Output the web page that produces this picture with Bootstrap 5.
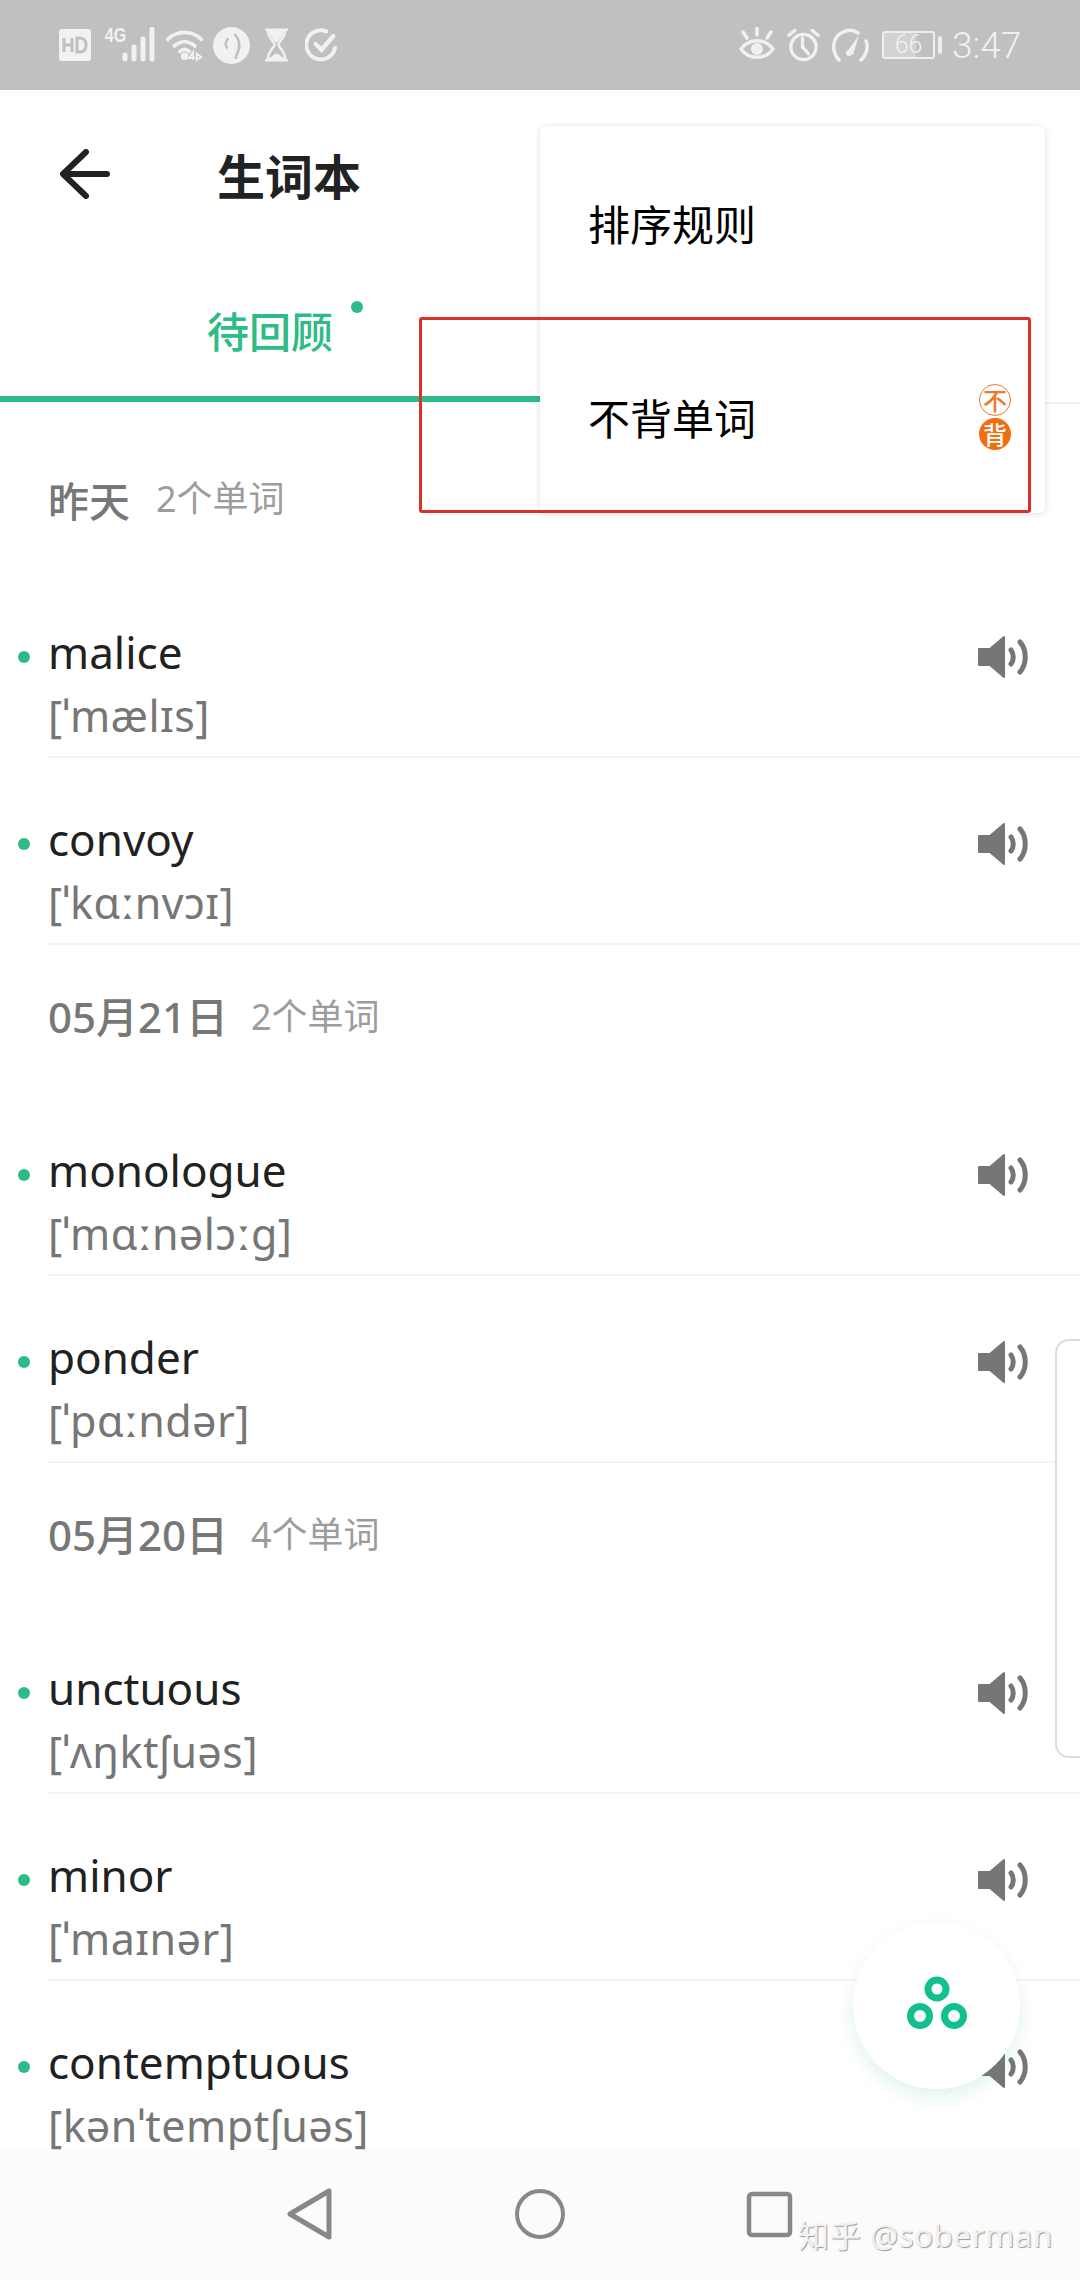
<!DOCTYPE html>
<html lang="zh-CN">

<head>
    <meta charset="UTF-8">
    <title>生词本</title>
    <meta name="viewport" content="width=device-width, initial-scale=1">
    <link href="https://cdn.jsdelivr.net/npm/bootstrap@5.3.3/dist/css/bootstrap.min.css" rel="stylesheet">
    <style>
        html, body { height: 2280px; overflow: hidden; }
        body { font-family: "Noto Sans", "Noto Sans CJK SC", sans-serif; background: #fff; }
        .screen { width: 1080px; height: 2280px; overflow: hidden; }

        .status-bar { height: 90px; background: #c0c0c0; color: #f1f1f1; padding: 0 61px 0 59px; }
        .status-4g { font: 700 20px/20px "Liberation Sans", sans-serif; transform: scaleX(.8); width: 18px; margin: -20px 0 0 12px; }
        .si-wifi { margin-left: 10px; }
        .si-circle { margin-left: 8px; }
        .si-glass { margin-left: 14px; }
        .si-check { margin-left: 16px; }
        .si-alarm { margin-left: 12px; }
        .si-gauge { margin-left: 11px; }
        .status-time { font: 300 37px/1 Roboto, sans-serif; color: #f1f1f1; margin-left: 10px; width: 67px; }
        .batt { width: 53px; height: 28px; margin-left: 13px; border: 2px solid #eee; border-radius: 3px; background: linear-gradient(90deg, #d2d2d2 66%, transparent 66%); font: 300 25px/24px Roboto, sans-serif; }
        .batt-tip { width: 4px; height: 18px; background: #eee; border-radius: 2px; margin-left: 3px; }

        .top-bar { height: 170px; padding: 0 0 3px 60px; }
        .top-title { font: 700 48px/1 "Noto Sans CJK SC", sans-serif; color: #222; margin-left: 107px; }

        .tab-row { height: 142px; }
        .tab-on { width: 540px; height: 142px; border-bottom: 6px solid #2dbb86; color: #2dbb86; font: 500 42px/1 "Noto Sans CJK SC", sans-serif; padding-top: 49px; }
        .tab-rest { height: 144px; border-bottom: 2px solid #f1f1f1; }
        .tab-dot { width: 12px; height: 12px; background: #2dbb86; border-radius: 50%; left: 351px; top: 41px; }

        .word-list { padding-top: 25px; min-height: 0; }
        .day-head { height: 144px; padding: 48px 0 0 48px; }
        .day-name { font: 500 41px/48px "Noto Sans CJK SC", sans-serif; color: #777; width: 109px; }
        .day-name-wide { width: 204px; font-size: 42px; font-family: "Noto Sans", "Noto Sans CJK SC", sans-serif; }
        .day-count { font: 400 36px/48px "Noto Sans", "Noto Sans CJK SC", sans-serif; color: #9c9c9c; margin-left: -1px; }

        .word-row { height: 187px; padding-left: 48px; }
        .word-dot { width: 12px; height: 12px; background: #2dbb86; border-radius: 50%; left: 18px; top: 80px; }
        .word-body { height: 187px; border-bottom: 2px solid #f3f3f3; padding-top: 52px; }
        .word-text { font: 400 44px/58px "Noto Sans", sans-serif; color: #212121; }
        .word-phon { font: 400 43px/44px "Noto Sans", sans-serif; letter-spacing: .5px; color: #767676; margin-top: 13px; }
        .word-sound { right: 50px; top: 64px; }

        .nav-bar { height: 130px; background: #fbfbfb; padding: 38px 0 0 286px; z-index: 2; }
        .nav-gap { margin-left: 180px; }

        .pop-menu { left: 540px; top: 126px; width: 505px; height: 387px; border-radius: 6px; background: #fff; box-shadow: 0 1px 6px rgba(0, 0, 0, .14); font: 400 42px/1 "Noto Sans CJK SC", sans-serif; color: #000; z-index: 5; }
        .pop-item { height: 193px; padding-left: 48px; }
        .pop-item + .pop-item { padding-top: 2px; }
        .pop-tag { width: 32px; height: 32px; border-radius: 50%; font: 500 24px/30px "Noto Sans CJK SC", sans-serif; text-align: center; }
        .pop-tag-line { border: 1px solid #ec7a2b; color: #ec7a2b; }
        .pop-tag-fill { background: #f26d0f; color: #fff; margin-top: 2px; line-height: 32px; }
        .pop-tags { right: 34px; top: 258px; }

        .red-box { left: 419px; top: 317px; width: 612px; height: 196px; border: 3px solid #d9302a; border-radius: 3px; z-index: 6; }
        .side-card { left: 1055px; top: 1339px; width: 40px; height: 419px; border: 2px solid #ddd; border-radius: 14px; background: #fff; }
        .fab { left: 853px; top: 1922px; width: 167px; height: 167px; padding-bottom: 5px; border-radius: 50%; background: #fff; box-shadow: 0 8px 18px rgba(30, 170, 130, .14); z-index: 4; }
        .mark-text { left: 798px; top: 2213px; font: 400 31px/44px "Noto Sans", "Noto Sans CJK SC", sans-serif; letter-spacing: .7px; color: #f2f2f2; text-shadow: 1px 1px 1px #9a9a9a; z-index: 7; }
    </style>
</head>

<body>

    <svg width="0" height="0" class="position-absolute">
        <symbol id="sound" viewBox="0 0 52 44">
            <path d="M1 14h11L26 2v40L12 30H1z" fill="#767676" stroke="#767676" stroke-width="2" stroke-linejoin="round"/>
            <path d="M33 15c3 4 3 10 0 14M42 7c7 8 7 22 0 30" fill="none" stroke="#767676" stroke-width="5" stroke-linecap="round"/>
        </symbol>
    </svg>

    <div class="screen position-relative d-flex flex-column">

        <!-- status bar -->
        <div class="status-bar d-flex align-items-center justify-content-between flex-shrink-0">
            <div class="d-flex align-items-center">
                <svg width="32" height="32" viewBox="0 0 32 32"><rect width="32" height="32" rx="3" fill="#f1f1f1"/><path d="M5 9v14M13 9v14M5 16h8M18 9v14h3c4 0 6-3 6-7s-2-7-6-7z" fill="none" stroke="#c0c0c0" stroke-width="3"/></svg>
                <span class="status-4g">4G</span>
                <svg width="35" height="36" viewBox="0 0 35 36"><path d="M4 28v4M13 20v12M22 12v20M31 2v30" stroke="#f1f1f1" stroke-width="5" stroke-linecap="round"/></svg>
                <svg class="si-wifi" width="39" height="36" viewBox="0 0 42 36"><path d="M2 12C12 2 28 2 38 12M9 19c7-6 15-6 22 0M15 25c3-3 7-3 10 0" fill="none" stroke="#f1f1f1" stroke-width="4" stroke-linecap="round"/><circle cx="20" cy="30" r="4" fill="#f1f1f1"/><path d="M29 34v-8l-4 6h6M33 27l5 4-5 3z" fill="none" stroke="#f1f1f1" stroke-width="2"/></svg>
                <svg class="si-circle" width="37" height="37" viewBox="0 0 36 36"><circle cx="18" cy="18" r="18" fill="#f1f1f1"/><path d="M15 11c-3 3-4 6-1 10M21 7c5 5 6 13 2 20l-1 4" fill="none" stroke="#c0c0c0" stroke-width="2.5"/></svg>
                <svg class="si-glass" width="25" height="36" viewBox="0 0 26 36"><path d="M1 2h24M1 34h24" stroke="#f1f1f1" stroke-width="2.5"/><path d="M4 3h18c0 7-5 10-7 14v1c2 4 7 8 7 14H4c0-6 5-10 7-14v-1C9 13 4 10 4 3z" fill="none" stroke="#f1f1f1" stroke-width="2.5"/><path d="M5 3h16c-1 6-5 10-8 13C10 13 6 9 5 3zM7 32c1-3 4-5 6-5s5 2 6 5z" fill="#f1f1f1"/></svg>
                <svg class="si-check" width="33" height="36" viewBox="0 0 34 36"><path d="M31 21A15 15 0 1 1 22 4" fill="none" stroke="#f1f1f1" stroke-width="4" stroke-linecap="round"/><path d="M11 17l6 6 12-14" fill="none" stroke="#f1f1f1" stroke-width="4.5" stroke-linecap="round"/></svg>
            </div>
            <div class="d-flex align-items-center">
                <svg width="36" height="36" viewBox="0 0 36 36"><path d="M2 22c8-11 24-11 32 0-8 11-24 11-32 0z" fill="none" stroke="#f1f1f1" stroke-width="3.5"/><circle cx="18" cy="22" r="6" fill="#f1f1f1"/><path d="M18 1v7M4 5l4 6M32 5l-4 6" stroke="#f1f1f1" stroke-width="3.5" stroke-linecap="round"/></svg>
                <svg class="si-alarm" width="33" height="36" viewBox="0 0 34 36"><circle cx="17" cy="20" r="13" fill="none" stroke="#f1f1f1" stroke-width="3.5"/><path d="M16 11v9l6 7M2 8l6-5M32 8l-6-5" fill="none" stroke="#f1f1f1" stroke-width="3.5" stroke-linecap="round"/></svg>
                <svg class="si-gauge" width="38" height="36" viewBox="0 0 38 36"><path d="M8 33C0 24 1 10 12 5c6-3 11-2 15 1M30 33c7-7 7-15 5-19" fill="none" stroke="#f1f1f1" stroke-width="3.5" stroke-linecap="round"/><path d="M16 25l12-17-6 20z" fill="#f1f1f1"/><circle cx="18" cy="26" r="3" fill="#f1f1f1"/></svg>
                <div class="batt text-center">66</div>
                <div class="batt-tip"></div>
                <div class="status-time">3:47</div>
            </div>
        </div>

        <!-- title -->
        <div class="top-bar d-flex align-items-center flex-shrink-0">
            <svg width="50" height="50" viewBox="0 0 50 50"><path d="M47 25H4M26 3L3 25l23 22" fill="none" stroke="#222" stroke-width="6" stroke-linecap="round" stroke-linejoin="round"/></svg>
            <div class="top-title">生词本</div>
        </div>

        <!-- tabs -->
        <div class="tab-row d-flex position-relative flex-shrink-0">
            <div class="tab-on text-center">待回顾</div>
            <div class="tab-rest flex-grow-1"></div>
            <span class="tab-dot position-absolute"></span>
        </div>

        <!-- list -->
        <div class="word-list flex-grow-1">
            <div class="day-head d-flex"><div class="day-name">昨天</div><div class="day-count">2个单词</div></div>
            <div class="word-row position-relative"><span class="word-dot position-absolute"></span><div class="word-body"><div class="word-text">malice</div><div class="word-phon">[ˈmælɪs]</div></div><svg class="word-sound position-absolute" width="52" height="44"><use href="#sound"/></svg></div>
            <div class="word-row position-relative"><span class="word-dot position-absolute"></span><div class="word-body"><div class="word-text">convoy</div><div class="word-phon">[ˈkɑːnvɔɪ]</div></div><svg class="word-sound position-absolute" width="52" height="44"><use href="#sound"/></svg></div>
            <div class="day-head d-flex"><div class="day-name day-name-wide">05月21日</div><div class="day-count">2个单词</div></div>
            <div class="word-row position-relative"><span class="word-dot position-absolute"></span><div class="word-body"><div class="word-text">monologue</div><div class="word-phon">[ˈmɑːnəlɔːg]</div></div><svg class="word-sound position-absolute" width="52" height="44"><use href="#sound"/></svg></div>
            <div class="word-row position-relative"><span class="word-dot position-absolute"></span><div class="word-body"><div class="word-text">ponder</div><div class="word-phon">[ˈpɑːndər]</div></div><svg class="word-sound position-absolute" width="52" height="44"><use href="#sound"/></svg></div>
            <div class="day-head d-flex"><div class="day-name day-name-wide">05月20日</div><div class="day-count">4个单词</div></div>
            <div class="word-row position-relative"><span class="word-dot position-absolute"></span><div class="word-body"><div class="word-text">unctuous</div><div class="word-phon">[ˈʌŋktʃuəs]</div></div><svg class="word-sound position-absolute" width="52" height="44"><use href="#sound"/></svg></div>
            <div class="word-row position-relative"><span class="word-dot position-absolute"></span><div class="word-body"><div class="word-text">minor</div><div class="word-phon">[ˈmaɪnər]</div></div><svg class="word-sound position-absolute" width="52" height="44"><use href="#sound"/></svg></div>
            <div class="word-row position-relative"><span class="word-dot position-absolute"></span><div class="word-body"><div class="word-text">contemptuous</div><div class="word-phon">[kənˈtemptʃuəs]</div></div><svg class="word-sound position-absolute" width="52" height="44"><use href="#sound"/></svg></div>
        </div>

        <!-- android nav -->
        <div class="nav-bar position-relative d-flex flex-shrink-0 align-items-start">
            <svg width="48" height="52" viewBox="0 0 48 52"><path d="M43 3v46L4 26z" fill="none" stroke="#888" stroke-width="5" stroke-linejoin="round"/></svg>
            <svg class="nav-gap" width="52" height="52" viewBox="0 0 52 52"><circle cx="26" cy="26" r="23" fill="none" stroke="#888" stroke-width="4"/></svg>
            <svg class="nav-gap" width="48" height="50" viewBox="0 0 48 50"><rect x="3" y="6" width="41" height="41" rx="3" fill="none" stroke="#888" stroke-width="4.5"/></svg>
        </div>

        <!-- overlays -->
        <div class="side-card position-absolute"></div>
        <div class="fab position-absolute d-flex align-items-center justify-content-center">
            <svg width="62" height="54" viewBox="0 0 62 54"><g fill="none" stroke="#10c08e" stroke-width="7"><circle cx="31" cy="13" r="9"/><circle cx="14" cy="40" r="9.5"/><circle cx="48" cy="40" r="9.5"/></g></svg>
        </div>
        <div class="pop-menu position-absolute">
            <div class="pop-item d-flex align-items-center">排序规则</div>
            <div class="pop-item d-flex align-items-center">不背单词</div>
            <div class="pop-tags position-absolute">
                <div class="pop-tag pop-tag-line">不</div>
                <div class="pop-tag pop-tag-fill">背</div>
            </div>
        </div>
        <div class="red-box position-absolute"></div>
        <div class="mark-text position-absolute">知乎 @soberman</div>
    </div>

    <script src="https://cdn.jsdelivr.net/npm/bootstrap@5.3.3/dist/js/bootstrap.bundle.min.js"></script>
</body>

</html>
